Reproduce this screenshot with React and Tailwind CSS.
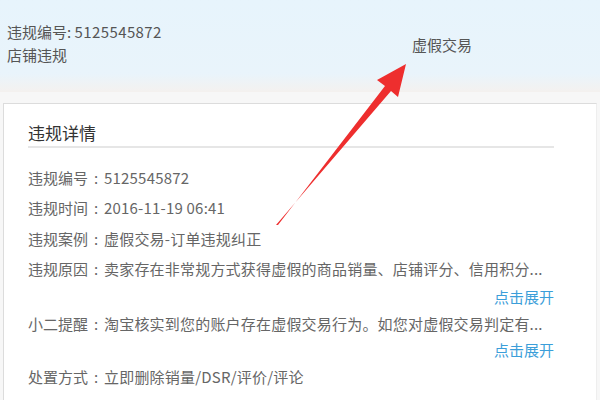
import React from "react";

const rows = [
  { label: "违规编号", value: "5125545872", h: "h-[30px]" },
  { label: "违规时间", value: "2016-11-19 06:41", h: "h-[30px]" },
  { label: "违规案例", value: "虚假交易-订单违规纠正", h: "h-[32px]" },
  { label: "违规原因", value: "卖家存在非常规方式获得虚假的商品销量、店铺评分、信用积分...", h: "h-[29px]", more: true },
  { label: "小二提醒", value: "淘宝核实到您的账户存在虚假交易行为。如您对虚假交易判定有...", h: "h-[26px]", more: true },
  { label: "处置方式", value: "立即删除销量/DSR/评价/评论", h: "h-[28px]" },
];

export default function App() {
  return (
    <div
      className="relative w-[600px] h-[400px] overflow-hidden bg-[#f7f7f7]"
      style={{ fontFamily: '"Microsoft YaHei", "Noto Sans CJK SC", "Noto Sans", sans-serif' }}
    >
      {/* top band */}
      <div className="h-[92px] bg-gradient-to-b from-[#e7f4fc] via-[#e9f4fb] via-80% to-[#f4f1ef] text-[15px] text-[#555] flex">
        <div className="pl-[7px] pt-[20px] leading-[24px]">
          <div>
            违规编号: <span className="tracking-[0.4px]">5125545872</span>
          </div>
          <div className="-mt-px">店铺违规</div>
        </div>
        <div className="ml-auto mr-[128px] pt-[33px] leading-[24px]">虚假交易</div>
      </div>

      {/* card */}
      <div className="mt-[11px] ml-[3px] mr-[3px] h-[320px] bg-white border-t border-l border-[#dcdcdc] border-r-[#eeeeee] border-r">
        <div className="pl-[24px] pr-[42px]">
          <div className="pt-[17px] h-[44px] border-b-2 border-[#e6e6e6] text-[17px] leading-[24px] text-[#333]">
            违规详情
          </div>
          <div className="text-[15px] text-[#666] mt-[15px]">
            {rows.map((r, i) => (
              <React.Fragment key={r.label}>
                <div className={`${r.h} flex items-center whitespace-nowrap`}>
                  {r.label}
                  <span className="inline-block w-[16px] text-center">:</span>
                  <span className="tracking-[0.2px]">{r.value}</span>
                </div>
                {r.more && (
                  <div
                    className={`${i === 3 ? "h-[27px]" : "h-[26px]"} flex items-center justify-end text-[#3b9ed9]`}
                  >
                    点击展开
                  </div>
                )}
              </React.Fragment>
            ))}
          </div>
        </div>
      </div>

      {/* red arrow annotation */}
      <svg className="absolute left-0 top-0" width="600" height="400" viewBox="0 0 600 400">
        <polygon
          points="276,225 278,225 385,86 377,80 406,64 398,97 391,91"
          fill="#ee2e2e"
        />
      </svg>
    </div>
  );
}
